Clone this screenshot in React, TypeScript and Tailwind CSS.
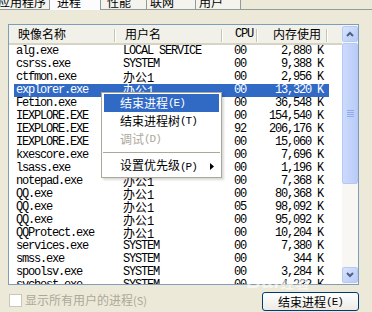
import React from "react";

type Row = [string, string, string, string];

const rows: Row[] = [
  ["alg.exe", "LOCAL SERVICE", "00", "2,880 K"],
  ["csrss.exe", "SYSTEM", "00", "9,388 K"],
  ["ctfmon.exe", "办公1", "00", "2,956 K"],
  ["explorer.exe", "办公1", "00", "13,320 K"],
  ["Fetion.exe", "办公1", "00", "36,548 K"],
  ["IEXPLORE.EXE", "办公1", "00", "154,540 K"],
  ["IEXPLORE.EXE", "办公1", "92", "206,176 K"],
  ["IEXPLORE.EXE", "办公1", "00", "15,060 K"],
  ["kxescore.exe", "SYSTEM", "00", "7,696 K"],
  ["lsass.exe", "SYSTEM", "00", "1,196 K"],
  ["notepad.exe", "办公1", "00", "7,368 K"],
  ["QQ.exe", "办公1", "00", "80,368 K"],
  ["QQ.exe", "办公1", "05", "98,092 K"],
  ["QQ.exe", "办公1", "00", "95,092 K"],
  ["QQProtect.exe", "办公1", "00", "10,204 K"],
  ["services.exe", "SYSTEM", "00", "7,380 K"],
  ["smss.exe", "SYSTEM", "00", "344 K"],
  ["spoolsv.exe", "SYSTEM", "00", "3,284 K"],
  ["svchost.exe", "SYSTEM", "00", "4,232 K"],
];

const SELECTED = 3;

// SimSun-like mix: mono latin, CJK at full 12px
function Mixed({ text }: { text: string }) {
  const parts = text.split(/([\u4e00-\u9fff]+)/);
  return (
    <>
      {parts.map((p, i) =>
        /[\u4e00-\u9fff]/.test(p) ? (
          <span key={i} className="font-['Noto_Sans_CJK_SC',sans-serif] tracking-normal">
            {p}
          </span>
        ) : (
          <span key={i}>{p}</span>
        )
      )}
    </>
  );
}

function Chevron({ up }: { up?: boolean }) {
  return (
    <svg width="8" height="6" viewBox="0 0 8 6">
      <path
        d={up ? "M1 5 L4 2 L7 5" : "M1 1 L4 4 L7 1"}
        stroke="#4D6185"
        strokeWidth="2"
        fill="none"
      />
    </svg>
  );
}

function ScrollBtn({ up }: { up?: boolean }) {
  return (
    <div className="h-[16px] w-[16px] rounded-[2px] border border-[#B5C9F4] bg-gradient-to-br from-[#D9E4FD] to-[#B7CBF7] flex items-center justify-center">
      <Chevron up={up} />
    </div>
  );
}

function HeaderCell({
  label,
  width,
  className,
}: {
  label: React.ReactNode;
  width: string;
  className: string;
}) {
  return (
    <div className={`relative h-full flex items-center ${width} ${className}`}>
      {label}
      <div className="absolute right-0 top-[4px] h-[13px] w-[2px] border-l border-[#C7C5B2] border-r border-r-white" />
    </div>
  );
}

export default function App() {
  return (
    <div className="relative w-[372px] h-[312px] overflow-hidden bg-[#ECE9D8] text-[12px] text-black font-['Noto_Sans_CJK_SC',sans-serif]">
      {/* Tabs, top clipped */}
      <div className="flex h-[10px]">
        <div className="ml-[-8px] w-[58px] h-[10px] overflow-hidden pl-[6px] bg-[#F4F3EE] border-r border-b border-[#919B9C]">
          <span className="block leading-[12px] -mt-[4px]">应用程序</span>
        </div>
        <div className="w-[51px] h-[10px] overflow-hidden pl-[7px] bg-[#FCFCFE] border-r border-[#919B9C]">
          <span className="block leading-[12px] -mt-[4px]">进程</span>
        </div>
        <div className="w-[46px] h-[10px] overflow-hidden pl-[6px] bg-[#F4F3EE] border-r border-b border-[#919B9C]">
          <span className="block leading-[12px] -mt-[4px]">性能</span>
        </div>
        <div className="w-[49px] h-[10px] overflow-hidden pl-[3px] bg-[#F4F3EE] border-r border-b border-[#919B9C]">
          <span className="block leading-[12px] -mt-[4px]">联网</span>
        </div>
        <div className="w-[45px] h-[10px] overflow-hidden pl-[3px] bg-[#F4F3EE] border-r border-b border-[#919B9C]">
          <span className="block leading-[12px] -mt-[4px]">用户</span>
        </div>
        <div className="flex-1 h-[10px] border-b border-[#919B9C]" />
      </div>

      {/* Process list */}
      <div className="ml-[8px] mt-[14px] w-[351px] h-[261px] border border-[#7F9DB9] bg-white flex">
        <div className="flex-1 flex flex-col overflow-hidden">
          <div className="h-[20px] flex bg-[#F1F0E9] border-b-2 border-[#D8D4C3] shrink-0">
            <HeaderCell label="映像名称" width="w-[107px]" className="pl-[9px]" />
            <HeaderCell label="用户名" width="w-[107px]" className="pl-[9px]" />
            <HeaderCell
              label={<span className="font-['Liberation_Mono',monospace] tracking-[-1.2px]">CPU</span>}
              width="w-[35px]"
              className="pl-[12px]"
            />
            <HeaderCell label="内存使用" width="w-[70px]" className="justify-end pr-[7px]" />
          </div>
          <div className="font-['Liberation_Mono',monospace] tracking-[-1.2px]">
            {rows.map((r, i) => {
              const sel = i === SELECTED;
              return (
                <div key={i} className="h-[13px] flex pl-[5px]">
                  <div
                    className={`w-[315px] flex items-center leading-[13px] ${
                      sel ? "bg-[#316AC5] text-white" : ""
                    }`}
                  >
                    <div className="w-[102px] pl-[2px] whitespace-nowrap">{r[0]}</div>
                    <div className="w-[107px] pl-[7px] whitespace-nowrap">
                      <Mixed text={r[1]} />
                    </div>
                    <div className="w-[35px] pl-[11px]">{r[2]}</div>
                    <div className="w-[71px] pr-[6px] text-right whitespace-nowrap">{r[3]}</div>
                  </div>
                </div>
              );
            })}
          </div>
        </div>

        {/* Scrollbar */}
        <div className="w-[16px] flex flex-col bg-[#F8F7F3] py-[1px]">
          <ScrollBtn up />
          <div className="flex-1 pt-[1px]">
            <div className="h-[141px] rounded-[2px] border border-[#B3C8F5] bg-gradient-to-r from-[#CCDAFC] to-[#BACCF8] flex flex-col items-center justify-center gap-[1px]">
              <div className="h-px w-[7px] bg-[#8EABEE]" />
              <div className="h-px w-[7px] bg-[#8EABEE]" />
              <div className="h-px w-[7px] bg-[#8EABEE]" />
              <div className="h-px w-[7px] bg-[#8EABEE]" />
            </div>
          </div>
          <ScrollBtn />
        </div>
      </div>

      {/* Bottom controls */}
      <div className="flex items-start mt-[7px]">
        <div className="flex items-center ml-[9px] mt-[1px] gap-[3px]">
          <div className="w-[13px] h-[13px] border border-[#C9C7BA] bg-white" />
          <span className="text-[#ACA899] leading-[13px]">
            显示所有用户的进程<span className="text-[11px]">(S)</span>
          </span>
        </div>
        <div className="ml-auto mr-[13px] w-[97px] h-[19px] rounded-[3px] border border-[#003C74] bg-gradient-to-b from-white to-[#ECEBE6] flex items-center justify-center leading-[12px]">
          结束进程<span className="font-['Liberation_Mono',monospace] tracking-[-1px] text-[11px]">(E)</span>
        </div>
      </div>

      {/* Context menu */}
      <div className="absolute left-[101px] top-[92px] w-[121px] bg-white border border-[#ACA899] pt-[1px] pb-[2px] shadow-[2px_2px_2px_rgba(0,0,0,0.15)]">
        <div className="h-[18px] mx-[2px] pl-[16px] flex items-center bg-[#316AC5] text-white">
          结束进程<span className="font-['Liberation_Mono',monospace] tracking-[-1px] text-[11px]">(E)</span>
        </div>
        <div className="h-[18px] mx-[2px] pl-[16px] flex items-center">
          结束进程树<span className="font-['Liberation_Mono',monospace] tracking-[-1px] text-[11px]">(T)</span>
        </div>
        <div className="h-[18px] mx-[2px] pl-[16px] flex items-center text-[#ACA899]">
          调试<span className="font-['Liberation_Mono',monospace] tracking-[-1px] text-[11px]">(D)</span>
        </div>
        <div className="h-[9px] mx-[1px] flex items-center">
          <div className="h-px w-full bg-[#ACA899]" />
        </div>
        <div className="h-[18px] mx-[2px] pl-[16px] pr-[5px] flex items-center">
          <span>
            设置优先级<span className="font-['Liberation_Mono',monospace] tracking-[-1px] text-[11px]">(P)</span>
          </span>
          <svg className="ml-auto" width="4" height="7" viewBox="0 0 4 7">
            <path d="M0 0 L4 3.5 L0 7 Z" fill="#000" />
          </svg>
        </div>
      </div>

      {/* Watermark */}
      <div className="absolute left-[246px] top-[266px] text-[20px] font-bold text-white/60 tracking-[1px] font-['Liberation_Sans',sans-serif] pointer-events-none">
        Bai<span className="font-['Noto_Sans_CJK_SC',sans-serif] text-[14px]">经验</span>
      </div>
    </div>
  );
}
